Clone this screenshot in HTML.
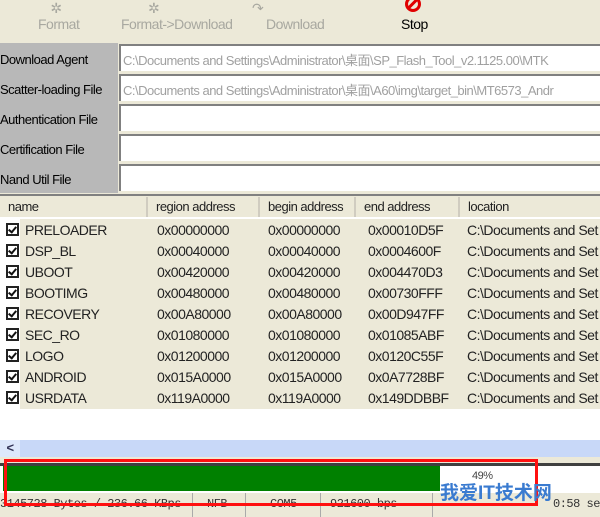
<html><head><style>
body{margin:0;width:600px;height:517px;overflow:hidden;background:#ece9d8;font-family:"Liberation Sans","Noto Sans CJK SC",sans-serif;position:relative;font-size:13px;letter-spacing:-0.5px}
.a{position:absolute}
.tb{color:#a8a8a0;font-size:14px}
.lbl{position:absolute;left:0;color:#000;font-size:13px}
.in{position:absolute;left:119px;width:481px;height:27px;background:#fff;border-top:2px solid #808080;border-left:2px solid #808080;box-sizing:border-box;color:#a0a0a0;font-size:13px;padding:4px 0 0 2px;white-space:nowrap;overflow:hidden}
.hd{position:absolute;top:197px;height:20px;border-right:2px solid #d0ccc0;font-size:13px;padding:2px 0 0 8px;box-sizing:border-box;color:#222}
.row{position:absolute;left:0;width:600px;height:21px;font-size:14px;color:#222}
.row span{position:absolute;top:3px}
.cb{position:absolute;left:6px;top:4px;width:13px;height:13px;border:2px solid #222;background:#fff;box-sizing:border-box}
.cb:after{content:"";position:absolute;left:2px;top:0px;width:3px;height:6px;border-right:2px solid #111;border-bottom:2px solid #111;transform:rotate(40deg)}
</style></head><body>
<div class="a tb" style="left:36px;top:0;width:40px;text-align:center">✲</div>
<div class="a tb" style="left:38px;top:16px">Format</div>
<div class="a tb" style="left:148px;top:0">✲</div>
<div class="a tb" style="left:121px;top:16px">Format->Download</div>
<div class="a tb" style="left:252px;top:0">↷</div>
<div class="a tb" style="left:266px;top:16px">Download</div>
<div class="a" style="left:405px;top:-4px;width:16px;height:16px;border:3px solid #e00000;border-radius:50%;box-sizing:border-box"></div>
<div class="a" style="left:406px;top:2px;width:14px;height:3px;background:#e00000;transform:rotate(-45deg)"></div>
<div class="a" style="left:401px;top:16px;font-size:14px;color:#000">Stop</div>
<div class="a" style="left:0;top:43px;width:118px;height:150px;background:#b8b8b8"></div>
<div class="lbl" style="top:52px">Download Agent</div>
<div class="lbl" style="top:82px">Scatter-loading File</div>
<div class="lbl" style="top:112px">Authentication File</div>
<div class="lbl" style="top:142px">Certification File</div>
<div class="lbl" style="top:172px">Nand Util File</div>
<div class="in" style="top:44px">C:\Documents and Settings\Administrator\桌面\SP_Flash_Tool_v2.1125.00\MTK</div>
<div class="in" style="top:74px">C:\Documents and Settings\Administrator\桌面\A60\img\target_bin\MT6573_Andr</div>
<div class="in" style="top:104px"></div>
<div class="in" style="top:134px"></div>
<div class="in" style="top:164px"></div>
<div class="a" style="left:0;top:194px;width:600px;height:246px;background:#fff;border-top:2px solid #808080;box-sizing:border-box"></div>
<div class="a" style="left:0;top:196px;width:600px;height:21px;background:#ece9d8"></div>
<div class="hd" style="left:0;width:148px">name</div>
<div class="hd" style="left:148px;width:112px">region address</div>
<div class="hd" style="left:260px;width:96px">begin address</div>
<div class="hd" style="left:356px;width:104px">end address</div>
<div class="hd" style="left:460px;width:140px;border:none">location</div>
<div class="a" style="left:20px;top:219px;width:580px;height:190px;background:#ece9d8"></div>
<div class="row" style="top:219px"><div class="cb"></div><span style="left:25px">PRELOADER</span><span style="left:157px">0x00000000</span><span style="left:268px">0x00000000</span><span style="left:368px">0x00010D5F</span><span style="left:467px">C:\Documents and Set</span></div>
<div class="row" style="top:240px"><div class="cb"></div><span style="left:25px">DSP_BL</span><span style="left:157px">0x00040000</span><span style="left:268px">0x00040000</span><span style="left:368px">0x0004600F</span><span style="left:467px">C:\Documents and Set</span></div>
<div class="row" style="top:261px"><div class="cb"></div><span style="left:25px">UBOOT</span><span style="left:157px">0x00420000</span><span style="left:268px">0x00420000</span><span style="left:368px">0x004470D3</span><span style="left:467px">C:\Documents and Set</span></div>
<div class="row" style="top:282px"><div class="cb"></div><span style="left:25px">BOOTIMG</span><span style="left:157px">0x00480000</span><span style="left:268px">0x00480000</span><span style="left:368px">0x00730FFF</span><span style="left:467px">C:\Documents and Set</span></div>
<div class="row" style="top:303px"><div class="cb"></div><span style="left:25px">RECOVERY</span><span style="left:157px">0x00A80000</span><span style="left:268px">0x00A80000</span><span style="left:368px">0x00D947FF</span><span style="left:467px">C:\Documents and Set</span></div>
<div class="row" style="top:324px"><div class="cb"></div><span style="left:25px">SEC_RO</span><span style="left:157px">0x01080000</span><span style="left:268px">0x01080000</span><span style="left:368px">0x01085ABF</span><span style="left:467px">C:\Documents and Set</span></div>
<div class="row" style="top:345px"><div class="cb"></div><span style="left:25px">LOGO</span><span style="left:157px">0x01200000</span><span style="left:268px">0x01200000</span><span style="left:368px">0x0120C55F</span><span style="left:467px">C:\Documents and Set</span></div>
<div class="row" style="top:366px"><div class="cb"></div><span style="left:25px">ANDROID</span><span style="left:157px">0x015A0000</span><span style="left:268px">0x015A0000</span><span style="left:368px">0x0A7728BF</span><span style="left:467px">C:\Documents and Set</span></div>
<div class="row" style="top:387px"><div class="cb"></div><span style="left:25px">USRDATA</span><span style="left:157px">0x119A0000</span><span style="left:268px">0x119A0000</span><span style="left:368px">0x149DDBBF</span><span style="left:467px">C:\Documents and Set</span></div>
<div class="a" style="left:0;top:440px;width:600px;height:17px;background:#c8d8f8"></div>
<div class="a" style="left:0;top:440px;width:20px;height:17px;background:#dde8fb;color:#335;font-size:13px;text-align:center;font-weight:bold">&lt;</div>
<div class="a" style="left:0;top:463px;width:600px;height:30px;background:#fff;border-top:3px solid #404040;box-sizing:border-box"></div>
<div class="a" style="left:3px;top:466px;width:437px;height:25px;background:#008000"></div>
<div class="a" style="left:472px;top:470px;font-size:11px;color:#444">49%</div>
<div class="a" style="left:0;top:493px;width:600px;height:24px;background:#ece9d8;font-family:'Liberation Mono',monospace;font-size:12px;color:#333;white-space:nowrap">
<span class="a" style="left:0;top:4px">3145728 Bytes / 236.66 KBps</span>
<span class="a" style="left:192px;top:0;height:24px;border-left:1px solid #aaa"></span>
<span class="a" style="left:207px;top:4px">NFB</span>
<span class="a" style="left:245px;top:0;height:24px;border-left:1px solid #aaa"></span>
<span class="a" style="left:270px;top:4px">COM5</span>
<span class="a" style="left:320px;top:0;height:24px;border-left:1px solid #aaa"></span>
<span class="a" style="left:330px;top:4px">921600 bps</span>
<span class="a" style="left:432px;top:0;height:24px;border-left:1px solid #aaa"></span>
<span class="a" style="left:553px;top:4px">0:58 sec</span>
</div>
<div class="a" style="left:4px;top:459px;width:534px;height:47px;border:3px solid #ff1010;box-sizing:border-box"></div>
<div class="a" style="left:440px;top:478px;font-size:19px;color:#3a7bd0;font-weight:bold;letter-spacing:0">我爱IT技术网</div>
</body></html>
